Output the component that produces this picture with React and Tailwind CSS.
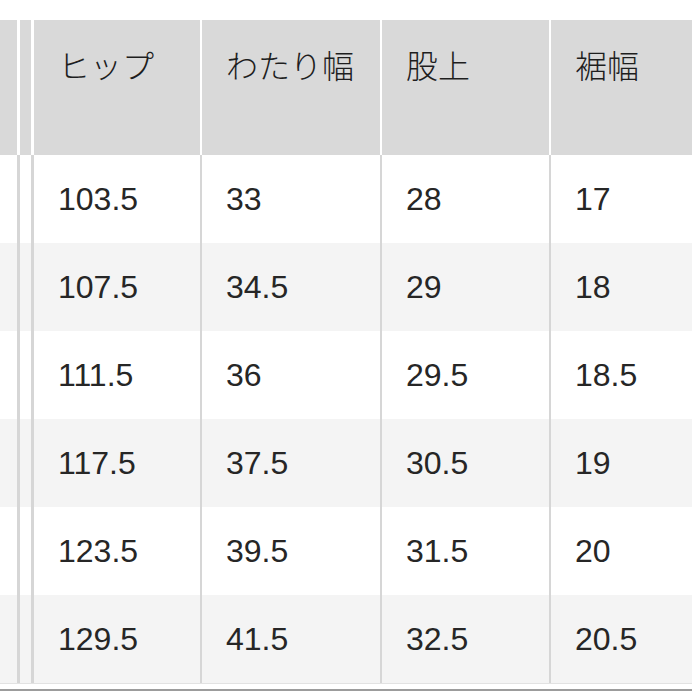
const headers = ["ヒップ", "わたり幅", "股上", "裾幅"];

const rows = [
  ["103.5", "33", "28", "17"],
  ["107.5", "34.5", "29", "18"],
  ["111.5", "36", "29.5", "18.5"],
  ["117.5", "37.5", "30.5", "19"],
  ["123.5", "39.5", "31.5", "20"],
  ["129.5", "41.5", "32.5", "20.5"],
];

const grid = "grid grid-cols-[17px_14px_169px_180px_169px_1fr]";

export default function App() {
  return (
    <div className="h-[692px] w-[692px] overflow-hidden bg-white pt-[20px] text-[#1e1e1e]">
      <div className={`${grid} h-[135px] bg-white`}>
        <div className="bg-[#d9d9d9]" />
        <div className="border-l-[3px] border-white bg-[#d9d9d9]" />
        {headers.map((h, i) => (
          <div
            key={h}
            className={`${i === 0 ? "border-l-[3px]" : "border-l-2"} border-white bg-[#d9d9d9] pl-[24px] pt-[28px] text-[32px] leading-none font-light`}
            style={{ fontFamily: '"Noto Sans CJK JP", "Noto Sans", sans-serif' }}
          >
            {h}
          </div>
        ))}
      </div>

      {rows.map((r, ri) => (
        <div key={ri} className={`${grid} h-[88px] ${ri % 2 ? "bg-[#f4f4f4]" : "bg-white"}`}>
          <div />
          <div className="border-l-[3px] border-[#d6d6d6]" />
          {r.map((v, ci) => (
            <div
              key={ci}
              className={`${ci === 0 ? "border-l-[3px]" : "border-l-2"} flex items-center border-[#d6d6d6] pl-[24px] text-[32px] text-[#262626]`}
              style={{ fontFamily: '"Liberation Sans", Arial, sans-serif' }}
            >
              {v}
            </div>
          ))}
        </div>
      ))}

      <div className="h-[6px] border-t border-[#e2e2e2]" />
      <div className="h-[2px] bg-[#9c9c9c]" />
    </div>
  );
}
